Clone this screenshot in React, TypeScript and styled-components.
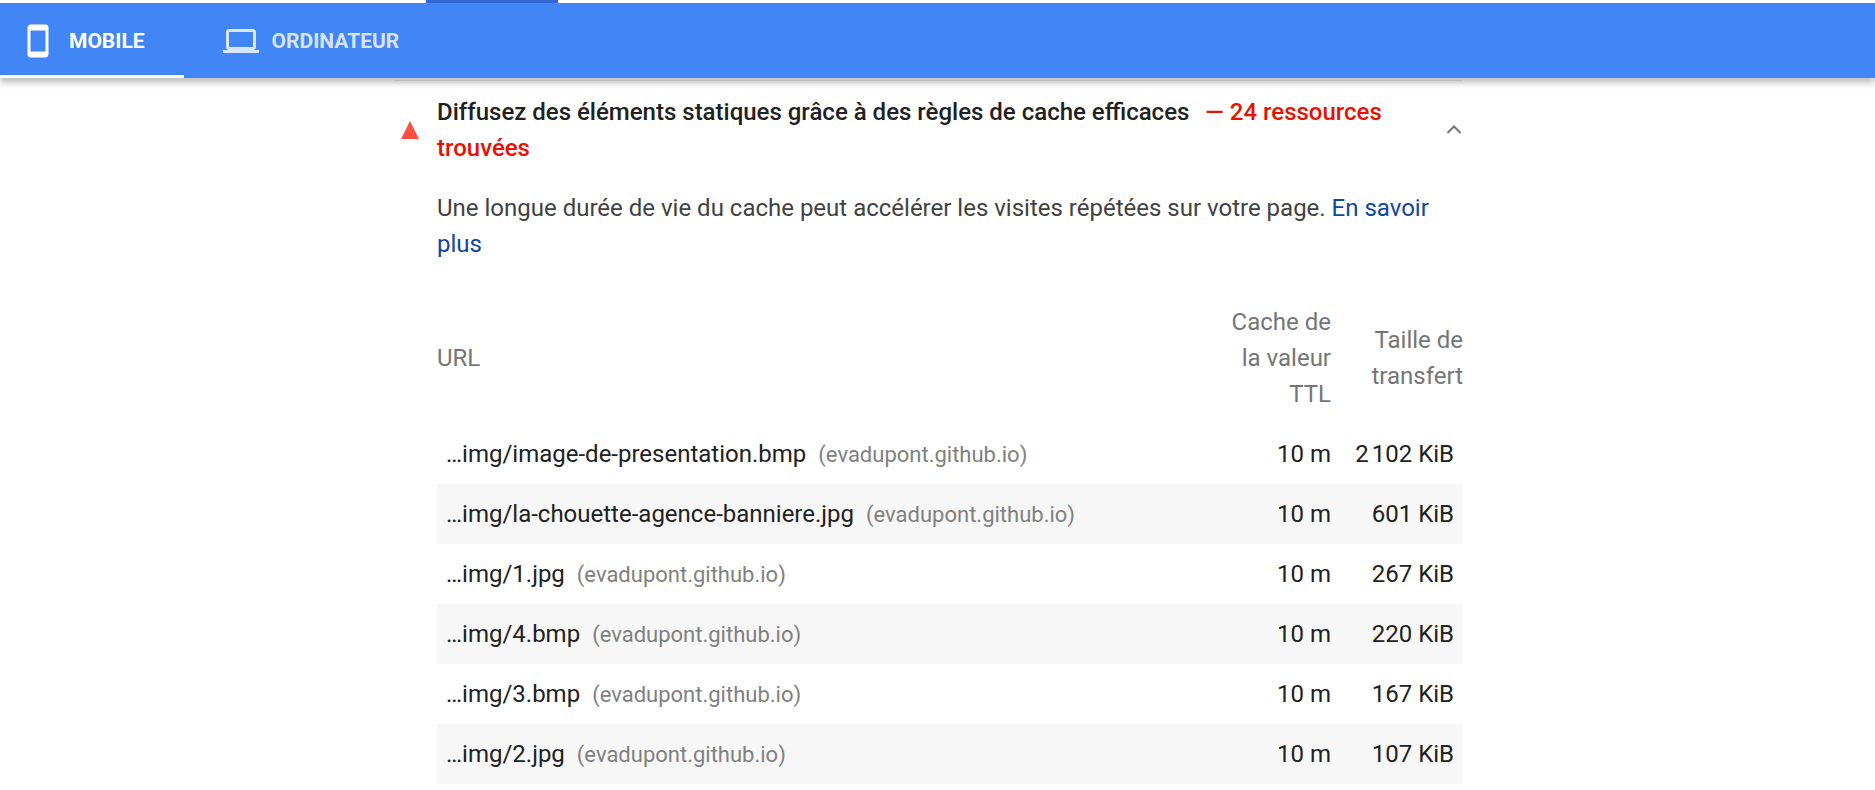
import React, { useState } from "react";
import styled, { createGlobalStyle } from "styled-components";

const GlobalStyle = createGlobalStyle`
  *, *::before, *::after { box-sizing: border-box; }
  body {
    margin: 0;
    background: #fff;
    color: #212121;
    font-family: Roboto, "Liberation Sans", sans-serif;
    font-size: 24px;
    line-height: 36px;
  }
`;

const TopStrip = styled.div`
  height: 3px;
  padding-left: 426px;
`;

const TopStripMarker = styled.div`
  width: 132px;
  height: 3px;
  background: #3367d6;
`;

const TabBar = styled.nav`
  position: sticky;
  top: 0;
  z-index: 1;
  display: flex;
  height: 75px;
  background: #4285f4;
  box-shadow: 0 5px 6px rgba(0, 0, 0, 0.24);
`;

const Tab = styled.button<{ $selected: boolean }>`
  display: flex;
  align-items: center;
  gap: 13px;
  padding: 4px 39px 0 20px;
  border: 0;
  border-bottom: 3px solid ${(p) => (p.$selected ? "#fff" : "transparent")};
  background: none;
  color: ${(p) => (p.$selected ? "#fff" : "rgba(255, 255, 255, 0.8)")};
  font: 700 21px/30px Roboto, "Liberation Sans", sans-serif;
  text-transform: uppercase;
  cursor: pointer;

  & + & {
    padding-left: 39px;
  }
`;

const TabIcon = styled.svg`
  flex: none;
  width: 36px;
  height: 36px;
  fill: currentColor;
`;

const Page = styled.main`
  padding: 2px 17px 0 0;
`;

const Audit = styled.section`
  max-width: 1068px;
  margin: 0 auto;
  border-top: 1px solid #ebebeb;
`;

const AuditTitle = styled.h2`
  margin: 0;
  font: inherit;
`;

const AuditHeader = styled.button`
  display: flex;
  align-items: center;
  width: 100%;
  padding: 13px 0 12px 6px;
  border: 0;
  background: none;
  color: inherit;
  font: inherit;
  font-weight: 500;
  text-align: left;
  cursor: pointer;
`;

const FailIcon = styled.svg`
  flex: none;
  width: 18px;
  height: 18px;
  margin-right: 18px;
  fill: #ff4e42;
`;

const AuditText = styled.span`
  flex: 1;
  padding-right: 30px;
`;

const Finding = styled.span`
  margin-left: 10px;
  color: #eb0f00;
`;

const Chevron = styled.svg`
  flex: none;
  width: 18px;
  height: 18px;
  fill: none;
  stroke: #757575;
  stroke-width: 2;
`;

const AuditBody = styled.div`
  padding-left: 42px;
`;

const Description = styled.p`
  margin: 12px 0 30px;
  color: #424242;
`;

const LearnMore = styled.a`
  color: #0d47a1;
  text-decoration: none;
`;

const ResourceTable = styled.table`
  width: 100%;
  border-collapse: collapse;
`;

const HeadCell = styled.th<{ $width?: number; $gap?: number }>`
  width: ${(p) => (p.$width ? `${p.$width}px` : "auto")};
  padding: 12px ${(p) => p.$gap ?? 0}px 12px 0;
  color: #757575;
  font-weight: 400;
  text-align: ${(p) => (p.$width ? "right" : "left")};
  vertical-align: middle;
`;

const ResourceRow = styled.tr`
  &:nth-child(even) {
    background: #f7f7f7;
  }
`;

const UrlCell = styled.td`
  padding: 12px 9px;
`;

const NumberCell = styled.td<{ $gap: number }>`
  padding: 12px ${(p) => p.$gap}px 12px 0;
  text-align: right;
  white-space: nowrap;
`;

const Host = styled.span`
  margin-left: 12px;
  color: #808080;
  font-size: 22px;
  line-height: 24px;
`;

const resources = [
  { file: "…img/image-de-presentation.bmp", size: "2\u202f102 KiB" },
  { file: "…img/la-chouette-agence-banniere.jpg", size: "601 KiB" },
  { file: "…img/1.jpg", size: "267 KiB" },
  { file: "…img/4.bmp", size: "220 KiB" },
  { file: "…img/3.bmp", size: "167 KiB" },
  { file: "…img/2.jpg", size: "107 KiB" },
];

const devices = [
  {
    name: "Mobile",
    icon: "M17 1.01L7 1c-1.1 0-1.99.9-1.99 2v18c0 1.1.89 2 1.99 2h10c1.1 0 2-.9 2-2V3c0-1.1-.9-1.99-2-1.99zM17 19H7V5h10v14z",
  },
  {
    name: "Ordinateur",
    icon: "M20 18c1.1 0 1.99-.9 1.99-2L22 6c0-1.1-.9-2-2-2H4c-1.1 0-2 .9-2 2v10c0 1.1.9 2 2 2H0v2h24v-2h-4zM4 6h16v10H4V6z",
  },
];

export default function App() {
  const [device, setDevice] = useState("Mobile");
  const [open, setOpen] = useState(true);

  return (
    <>
      <GlobalStyle />
      <TopStrip>
        <TopStripMarker />
      </TopStrip>
      <TabBar>
        {devices.map((d) => (
          <Tab
            key={d.name}
            type="button"
            aria-pressed={device === d.name}
            $selected={device === d.name}
            onClick={() => setDevice(d.name)}
          >
            <TabIcon viewBox="0 0 24 24" aria-hidden="true">
              <path d={d.icon} />
            </TabIcon>
            {d.name}
          </Tab>
        ))}
      </TabBar>
      <Page>
        <Audit>
          <AuditTitle>
            <AuditHeader type="button" aria-expanded={open} onClick={() => setOpen(!open)}>
              <FailIcon viewBox="0 0 18 18" aria-hidden="true">
                <path d="M9 0L18 18H0z" />
              </FailIcon>
              <AuditText>
                Diffusez des éléments statiques grâce à des règles de cache efficaces{" "}
                <Finding>— 24 ressources trouvées</Finding>
              </AuditText>
              <Chevron viewBox="0 0 18 18" aria-hidden="true">
                <path d={open ? "M2.5 12L9 5.5L15.500 12" : "M2.5 6L9 12.5L15.5 6"} />
              </Chevron>
            </AuditHeader>
          </AuditTitle>
          {open && (
            <AuditBody>
              <Description>
                Une longue durée de vie du cache peut accélérer les visites répétées sur votre page.{" "}
                <LearnMore href="#cache">En savoir plus</LearnMore>
              </Description>
              <ResourceTable>
                <thead>
                  <tr>
                    <HeadCell scope="col">URL</HeadCell>
                    <HeadCell scope="col" $width={124} $gap={11}>
                      Cache de la valeur TTL
                    </HeadCell>
                    <HeadCell scope="col" $width={121}>
                      Taille de transfert
                    </HeadCell>
                  </tr>
                </thead>
                <tbody>
                  {resources.map((r) => (
                    <ResourceRow key={r.file}>
                      <UrlCell>
                        {r.file}
                        <Host>(evadupont.github.io)</Host>
                      </UrlCell>
                      <NumberCell $gap={11}>10 m</NumberCell>
                      <NumberCell $gap={9}>{r.size}</NumberCell>
                    </ResourceRow>
                  ))}
                </tbody>
              </ResourceTable>
            </AuditBody>
          )}
        </Audit>
      </Page>
    </>
  );
}
